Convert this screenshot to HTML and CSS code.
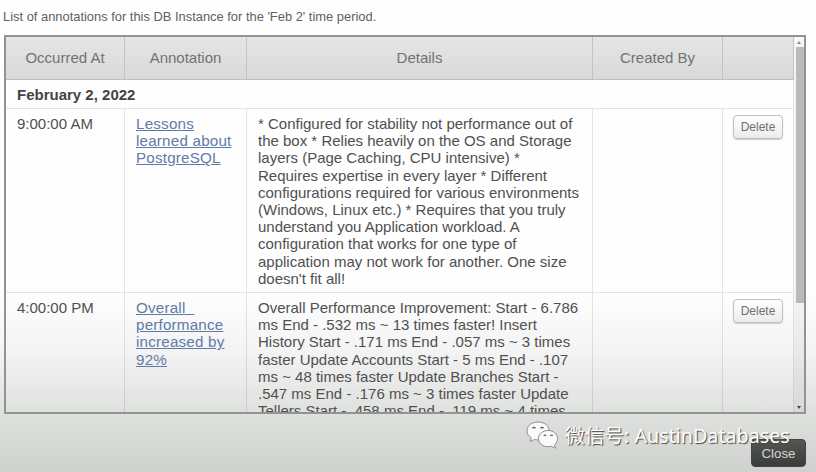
FILE: index.html
```html
<!DOCTYPE html>
<html lang="en">
<head>
    <meta charset="UTF-8">
    <meta name="viewport" content="width=device-width, initial-scale=1.0">
    <title>Annotations</title>
    <link rel="stylesheet" href="styles.css">
</head>
<body>
    <p class="intro">List of annotations for this DB Instance for the 'Feb 2' time period.</p>

    <div class="list-box">
        <div class="list-view">
            <table class="annotations">
                <colgroup>
                    <col class="col-time">
                    <col class="col-name">
                    <col class="col-details">
                    <col class="col-author">
                    <col class="col-action">
                </colgroup>
                <thead>
                    <tr>
                        <th>Occurred At</th>
                        <th>Annotation</th>
                        <th>Details</th>
                        <th>Created By</th>
                        <th></th>
                    </tr>
                </thead>
                <tbody>
                    <tr class="date-row">
                        <td colspan="5">February 2, 2022</td>
                    </tr>
                    <tr class="first-row">
                        <td>9:00:00 AM</td>
                        <td><a href="#">Lessons<br>learned about<br>PostgreSQL</a></td>
                        <td>* Configured for stability not performance out of<br>the box * Relies heavily on the OS and Storage<br>layers (Page Caching, CPU intensive) *<br>Requires expertise in every layer * Different<br>configurations required for various environments<br>(Windows, Linux etc.) * Requires that you truly<br>understand you Application workload. A<br>configuration that works for one type of<br>application may not work for another. One size<br>doesn't fit all!</td>
                        <td></td>
                        <td><button class="delete">Delete</button></td>
                    </tr>
                    <tr>
                        <td>4:00:00 PM</td>
                        <td><a href="#">Overall&nbsp;&nbsp;<br>performance<br>increased by<br>92%</a></td>
                        <td>Overall Performance Improvement: Start - 6.786<br>ms End - .532 ms ~ 13 times faster! Insert<br>History Start - .171 ms End - .057 ms ~ 3 times<br>faster Update Accounts Start - 5 ms End - .107<br>ms ~ 48 times faster Update Branches Start -<br>.547 ms End - .176 ms ~ 3 times faster Update<br>Tellers Start - .458 ms End - .119 ms ~ 4 times</td>
                        <td></td>
                        <td><button class="delete">Delete</button></td>
                    </tr>
                </tbody>
            </table>
        </div>
        <div class="scrollbar">
            <span class="arrow up"></span>
            <span class="thumb"></span>
            <span class="arrow down"></span>
        </div>
    </div>

    <div class="footer">
        <button class="close">Close</button>
    </div>

    <div class="watermark">
        <svg width="34" height="30" viewBox="0 0 34 30">
            <g fill="#fafafa" stroke="#777" stroke-width="0.8">
                <path d="M12 2C5.800 2 1 5.700 1 10.700c0 3 1.700 5.600 4.300 7.200L4 21.500l4.500-2c1.200.3 2.300.4 3.500.4 6.200 0 11-4 11-9.200S18.200 2 12 2z"/>
                <path d="M22 10.500c-5.400 0-9.500 3.600-9.500 8.100s4.100 8.100 9.500 8.100c1.200 0 2.300-.2 3.300-.5l4.200 2-1-3.400c2-1.500 3-3.700 3-6.200 0-4.500-4.100-8.100-9.500-8.100z"/>
            </g>
            <g fill="none" stroke="#555" stroke-width="1.200">
                <path d="M6.500 8.300q1.500-2 3 0M14.500 8.300q1.500-2 3 0M17.800 15.800q1.200-1.600 2.400 0M24.300 15.800q1.200-1.600 2.400 0"/>
            </g>
        </svg>
        <span>微信号: AustinDatabases</span>
    </div>
</body>
</html>
```

FILE: styles.css
```css
body {
    font-family: "Liberation Sans", Arial, sans-serif;
    margin: 0;
    height: 472px;
    overflow: hidden;
    position: relative;
    color: #505050;
    background: linear-gradient(#fdfefd 0, #fdfefd 290px, #f3f4f3 350px, #dfe1df 412px, #cfd1cf 472px);
}
.intro {
    margin: 0;
    padding: 9px 0 0 3px;
    height: 26px;
    font-size: 12.900px;
    line-height: 16px;
    color: #606060;
}
.list-box {
    display: flex;
    box-sizing: border-box;
    width: 802px;
    height: 379px;
    margin-left: 4px;
    border: 2px solid #929492;
}
.list-view {
    width: 788px;
    overflow: hidden;
}
.annotations {
    width: 788px;
    table-layout: fixed;
    border-collapse: separate;
    border-spacing: 0;
    font-size: 15px;
    line-height: 17.200px;
    white-space: nowrap;
}
.col-time {
    width: 119px;
}
.col-name {
    width: 122px;
}
.col-details {
    width: 346px;
}
.col-author {
    width: 130px;
}
.col-action {
    width: 71px;
}
th {
    height: 43px;
    box-sizing: border-box;
    padding: 0;
    font-weight: normal;
    color: #727272;
    background: linear-gradient(#e4e5e4, #d8dad8);
    border-right: 1px solid #c2c4c2;
    border-bottom: 1px solid #bdbfbd;
}
td {
    padding: 6px 0 5px 11px;
    vertical-align: top;
    border-right: 1px solid rgba(0, 0, 0, 0.1);
    border-bottom: 1px solid rgba(0, 0, 0, 0.1);
}
.date-row td {
    height: 29px;
    box-sizing: border-box;
    padding-top: 6px;
    padding-bottom: 0;
    font-weight: bold;
    color: #444;
}
.first-row td {
    height: 184px;
    box-sizing: border-box;
}
a {
    color: #5f7ba8;
    font-size: 15.200px;
    letter-spacing: 0.200px;
}
.delete {
    display: block;
    width: 50px;
    height: 24px;
    margin: 0 0 0 -1px;
    padding: 0;
    font-family: inherit;
    font-size: 12px;
    color: #707070;
    background: linear-gradient(#fff, #ececec);
    border: 1px solid #c0c0c0;
    border-radius: 4px;
    box-shadow: 0 1px 1px #ccc;
}
.scrollbar {
    display: flex;
    flex-direction: column;
    width: 10px;
    background: rgba(0, 0, 0, 0.04);
}
.arrow {
    display: flex;
    align-items: center;
    justify-content: center;
    height: 10px;
    background: #f7f7f7;
}
.arrow::before {
    content: "";
    border: 2.500px solid transparent;
}
.up::before {
    border-top: 0;
    border-bottom: 3px solid #888;
}
.down {
    margin-top: auto;
    background: none;
}
.down::before {
    border-bottom: 0;
    border-top: 3px solid #444;
}
.thumb {
    height: 256px;
    margin: 0 0 0 2px;
    background: #b9bab9;
}
.footer {
    display: flex;
    justify-content: flex-end;
    padding: 25px 10px 0 0;
}
.close {
    width: 55px;
    height: 28px;
    padding: 0;
    font-family: inherit;
    font-size: 13.300px;
    color: #d4d4d4;
    background: linear-gradient(#555755, #3a3c3a);
    border: 1px solid #444;
    border-radius: 4px;
}
/* signature laid over the dialog */
.watermark {
    position: absolute;
    left: 526px;
    top: 420px;
    display: flex;
    font-family: "Noto Sans", "Noto Sans CJK SC", sans-serif;
    font-size: 19.700px;
    line-height: 32px;
    white-space: nowrap;
    color: #fff;
    text-shadow: 1px 1px 1px #444;
}
.watermark span {
    margin-left: 5px;
}
```
